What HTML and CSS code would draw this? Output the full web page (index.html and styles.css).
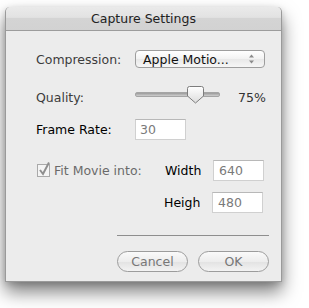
FILE: index.html
```html
<!DOCTYPE html>
<html lang="en">
<head>
  <meta charset="UTF-8">
  <title>Capture Settings</title>
  <link rel="stylesheet" href="styles.css">
</head>
<body>
  <div class="window">
    <div class="titlebar">Capture Settings</div>

    <div class="content">
      <!-- Compresión -->
      <div class="row row-compression">
        <span class="label dim">Compression:</span>
        <div class="popup">
          <span class="popup-text">Apple Motio...</span>
          <svg class="popup-arrows" width="7" height="10" viewBox="0 0 7 10">
            <path d="M3.5 0.5 L6 3.5 L1 3.5 Z" fill="#8a8a8a"/>
            <path d="M3.5 9.5 L6 6.5 L1 6.5 Z" fill="#8a8a8a"/>
          </svg>
        </div>
      </div>

      <!-- Calidad -->
      <div class="row row-quality">
        <span class="label dim">Quality:</span>
        <div class="slider">
          <div class="track"></div>
          <svg class="thumb" width="19" height="18" viewBox="0 0 19 18">
            <defs>
              <linearGradient id="thumbFill" x1="0" y1="0" x2="0" y2="1">
                <stop offset="0" stop-color="#ffffff"/>
                <stop offset="1" stop-color="#dcdcdc"/>
              </linearGradient>
            </defs>
            <path d="M3.5 0.5 H15.5 Q17.5 0.5 17.5 2.5 V10 L9.5 17 L1.5 10 V2.5 Q1.5 0.5 3.5 0.5 Z"
                  fill="url(#thumbFill)" stroke="#7d7d7d" stroke-width="1"/>
          </svg>
        </div>
        <span class="percent">75%</span>
      </div>

      <!-- Frame rate -->
      <div class="row row-frame">
        <span class="label">Frame Rate:</span>
        <div class="field field-short">30</div>
      </div>

      <!-- Fit movie -->
      <div class="row row-fit">
        <div class="check">
          <svg width="14" height="16" viewBox="0 0 14 16">
            <rect x="0.5" y="3.5" width="12" height="12" fill="#f4f4f4" stroke="#a9a9a9"/>
            <path d="M3 9 L6 13 L12 1.5" fill="none" stroke="#8e8e8e" stroke-width="2"/>
          </svg>
          <span class="check-label">Fit Movie into:</span>
        </div>
        <span class="label small-label">Width</span>
        <div class="field">640</div>
      </div>

      <div class="row row-height">
        <span class="label small-label">Heigh</span>
        <div class="field">480</div>
      </div>

      <div class="separator"></div>

      <div class="buttons">
        <button class="pill">Cancel</button>
        <button class="pill">OK</button>
      </div>
    </div>
  </div>
</body>
</html>
```

FILE: styles.css
```css
/* ====== RESET ====== */
html, body {
  margin: 0;
  padding: 0;
}

body {
  background: #ffffff;
  font-family: "Lucida Grande", "DejaVu Sans", sans-serif;
  font-size: 12.5px;
  padding: 7px 0 27px 5px;
}

/* ====== VENTANA ====== */
.window {
  width: 275px;
  height: 274px;
  border: 1px solid #9a9a9a;
  border-top: none;
  border-radius: 5px 5px 0 0;
  background: #ececec;
  box-shadow: 0 10px 18px rgba(0, 0, 0, 0.5), 0 2px 6px rgba(0, 0, 0, 0.15);
  display: flex;
  flex-direction: column;
}

.titlebar {
  height: 23px;
  line-height: 23px;
  text-align: center;
  color: #222;
  border-radius: 5px 5px 0 0;
  border-bottom: 1px solid #9c9c9c;
  background: linear-gradient(#eaeaea, #e2e2e2 45%, #d4d4d4 50%, #d2d2d2);
}

.content {
  padding: 19px 0 0 30px;
  display: flex;
  flex-direction: column;
}

/* ====== FILAS ====== */
.row {
  display: flex;
  align-items: center;
}

.label {
  width: 99px;
  color: #000;
}
.dim {
  color: #3c3c3c;
}

.row-compression { height: 18px; }
.row-quality     { height: 20px; margin-top: 19px; }
.row-frame       { height: 21px; margin-top: 12px; }
.row-fit         { height: 21px; margin-top: 20px; }
.row-height      { height: 21px; margin-top: 11px; padding-left: 128px; }

/* Popup */
.popup {
  height: 16px;
  border: 1px solid #9d9d9d;
  border-radius: 4px;
  background: linear-gradient(#ffffff, #f2f2f2 50%, #e8e8e8 51%, #f6f6f6);
  display: flex;
  align-items: center;
  justify-content: space-between;
  padding: 0 9px 0 7px;
  box-sizing: content-box;
  width: 112px;
}
.popup-text {
  color: #111;
}

/* Slider */
.slider {
  position: relative;
  width: 85px;
  height: 20px;
  margin-right: 18px;
}
.track {
  position: absolute;
  left: 0;
  right: 0;
  top: 5px;
  height: 3px;
  border-radius: 2px;
  background: linear-gradient(#9a9a9a, #cfcfcf);
  border: 1px solid #a5a5a5;
}
.thumb {
  position: absolute;
  left: 51px;
  top: -1px;
}
.percent {
  color: #333;
}

/* Campos de texto */
.field {
  width: 44px;
  height: 19px;
  line-height: 19px;
  padding-left: 5px;
  background: #fff;
  border: 1px solid #d0d0d0;
  border-top-color: #b8b8b8;
  color: #7a7a7a;
}
.field-short {
  width: 45px;
  padding-left: 4px;
}

/* Checkbox */
.check {
  display: flex;
  align-items: center;
  width: 128px;
  margin-left: 1px;
}
.check svg {
  margin-top: -3px;
  margin-right: 3px;
}
.check-label {
  color: #6a6a6a;
}
.small-label {
  width: 48px;
}

/* Separador */
.separator {
  margin: 22px 0 0 81px;
  width: 152px;
  height: 1px;
  background: #8e8e8e;
}

/* Botones */
.buttons {
  display: flex;
  gap: 10px;
  margin: 15px 0 0 81px;
}
.pill {
  width: 71px;
  height: 21px;
  border: 1px solid #9c9c9c;
  border-radius: 11px;
  background: linear-gradient(#fafafa, #ededed 50%, #e2e2e2 51%, #f3f3f3);
  font-family: "Lucida Grande", "DejaVu Sans", sans-serif;
  font-size: 12.5px;
  color: #777;
  padding: 0;
}
```
